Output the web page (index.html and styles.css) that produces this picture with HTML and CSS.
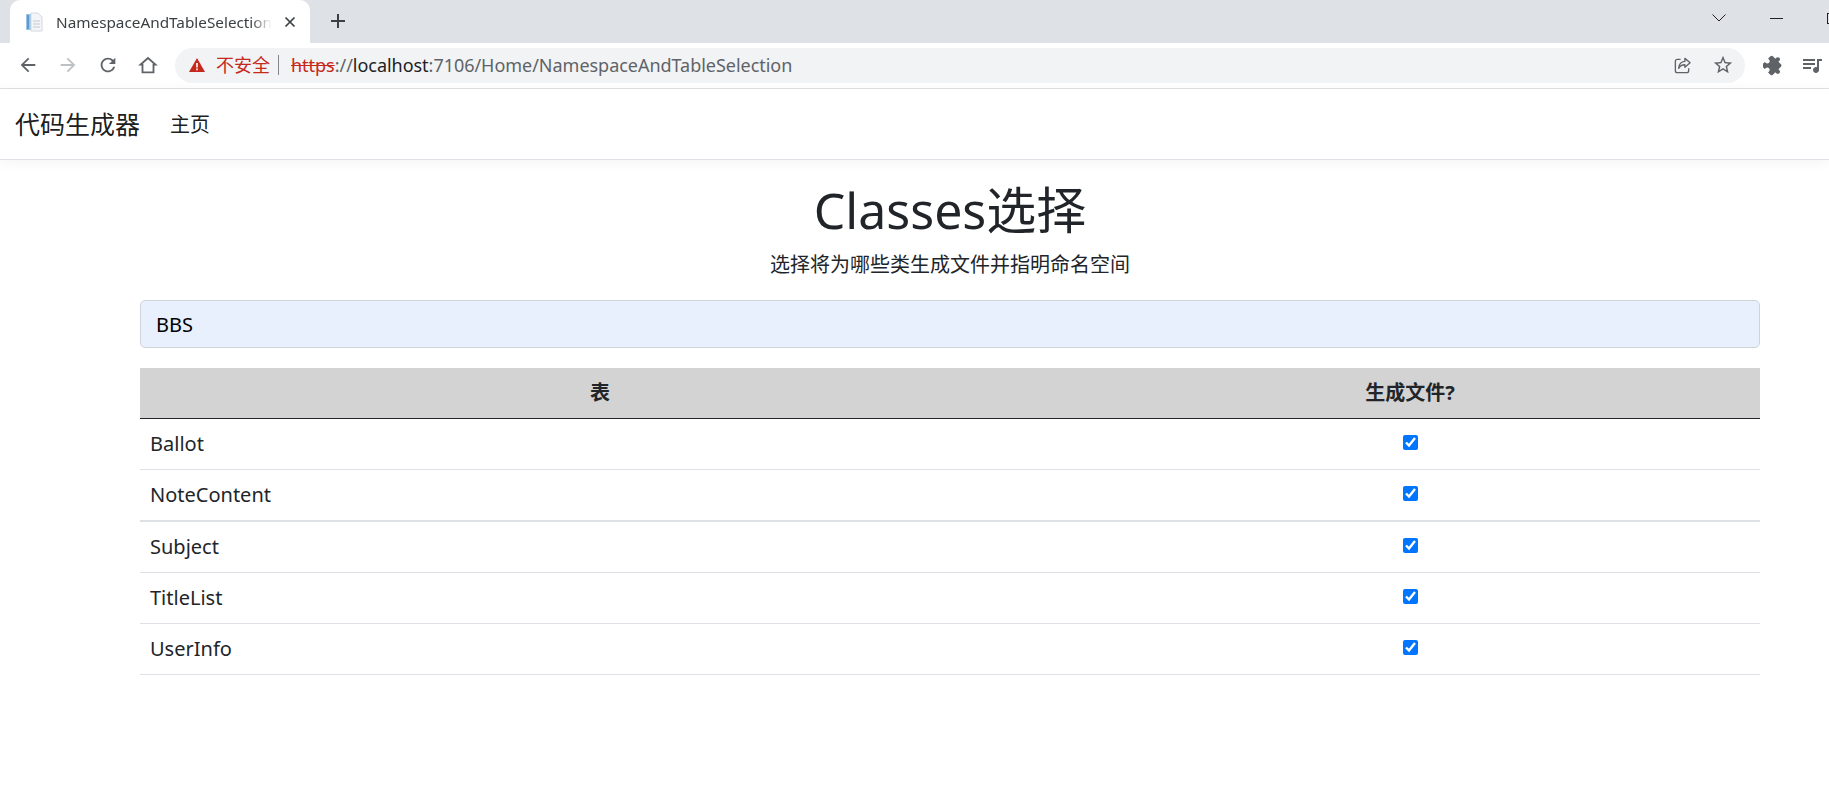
FILE: index.html
```html
<!DOCTYPE html>
<html lang="zh-CN">
<head>
<meta charset="utf-8">
<title>NamespaceAndTableSelection</title>
<link rel="stylesheet" href="styles.css">
</head>
<body>
<div class="tabstrip">
  <div class="tab">
    <svg class="favicon" viewBox="0 0 20 20" width="20" height="20"><rect x="1" y="2" width="5" height="16" fill="#9cc4e6"/><rect x="2" y="3" width="2" height="14" fill="#5b9bd5"/><path d="M6 1h7l4 4v14H6z" fill="#f3f5f8" stroke="#d3d8e0"/><path d="M8 9h7M8 12h7M8 15h7" stroke="#c3c9d2"/></svg>
    <span class="tab-title">NamespaceAndTableSelection</span>
    <svg class="tab-close" viewBox="0 0 12 12" width="12" height="12"><path d="M1.5 1.5l9 9M10.5 1.5l-9 9" stroke="#3c4043" stroke-width="1.7"/></svg>
  </div>
  <svg class="new-tab" viewBox="0 0 16 16" width="16" height="16"><path d="M8 1v14M1 8h14" stroke="#3c4043" stroke-width="2"/></svg>
  <div class="win-controls">
    <svg class="win-chevron" viewBox="0 0 14 8" width="14" height="8"><path d="M.5.5L7 7 13.5.5" fill="none" stroke="#222" stroke-width="1"/></svg>
    <span class="win-min"></span>
    <span class="win-max"></span>
  </div>
</div>
<div class="toolbar">
  <svg class="tool" viewBox="0 0 24 24" width="22" height="22"><path fill="#5f6368" d="M20 11H7.83l5.59-5.59L12 4l-8 8 8 8 1.41-1.41L7.83 13H20v-2z"/></svg>
  <svg class="tool" viewBox="0 0 24 24" width="22" height="22"><path fill="#bdc1c6" d="M12 4l-1.41 1.41L16.17 11H4v2h12.17l-5.58 5.59L12 20l8-8z"/></svg>
  <svg class="tool" viewBox="0 0 24 24" width="22" height="22"><path fill="#5f6368" d="M17.65 6.35A7.958 7.958 0 0012 4c-4.42 0-7.99 3.58-7.99 8s3.57 8 7.99 8c3.73 0 6.84-2.55 7.73-6h-2.08A5.99 5.99 0 0112 18c-3.31 0-6-2.69-6-6s2.69-6 6-6c1.66 0 3.14.69 4.22 1.78L13 11h7V4l-2.35 2.35z"/></svg>
  <svg class="tool" viewBox="0 0 24 24" width="22" height="22"><path fill="none" stroke="#5f6368" stroke-width="2" d="M12 4.3L3.9 11.5H6V20h12v-8.5h2.1z"/></svg>
  <div class="omnibox">
    <svg class="warn" viewBox="0 0 16 14" width="16" height="14"><path fill="#c5291c" d="M8 0l8 14H0z"/><path stroke="#fff" stroke-width="1.6" d="M8 5v4.5M8 10.5v1.8"/></svg>
    <span class="not-secure">不安全</span>
    <span class="sep"></span>
    <span class="url"><s class="scheme">https</s><span class="url-dim">://</span><span class="host">localhost</span><span class="url-dim">:7106/Home/NamespaceAndTableSelection</span></span>
    <svg class="share" viewBox="0 0 20 20" width="19" height="19"><path fill="none" stroke="#5f6368" stroke-width="1.4" d="M8 3.5H4.5a2 2 0 00-2 2v10a2 2 0 002 2h10a2 2 0 002-2V13"/><path fill="none" stroke="#5f6368" stroke-width="1.4" stroke-linejoin="round" d="M12.5 2.5l5.5 4.7-5.5 4.7V9.2C9.5 9.2 7.4 10.4 6 13c.2-4 2.6-7 6.5-7.3z"/></svg>
    <svg class="star" viewBox="0 0 24 24" width="22" height="22"><path fill="#5f6368" d="M22 9.24l-7.19-.62L12 2 9.19 8.63 2 9.24l5.46 4.73L5.82 21 12 17.27 18.18 21l-1.63-7.03L22 9.24zM12 15.4l-3.76 2.27 1-4.28-3.32-2.88 4.38-.38L12 6.1l1.71 4.04 4.38.38-3.32 2.88 1 4.28L12 15.4z"/></svg>
  </div>
  <svg class="puzzle" viewBox="0 0 24 24" width="21" height="21"><path fill="#5f6368" transform="rotate(45 12 12)" d="M20.5 11H19V7c0-1.1-.9-2-2-2h-4V3.5C13 2.12 11.88 1 10.5 1S8 2.12 8 3.5V5H4c-1.1 0-1.99.9-1.99 2v3.8H3.5c1.49 0 2.7 1.21 2.7 2.7s-1.21 2.7-2.7 2.7H2V20c0 1.1.9 2 2 2h3.8v-1.5c0-1.49 1.21-2.7 2.7-2.7 1.49 0 2.7 1.21 2.7 2.7V22H17c1.1 0 2-.9 2-2v-4h1.5c1.38 0 2.5-1.12 2.5-2.5S21.88 11 20.5 11z"/></svg>
  <svg class="queue" viewBox="0 0 24 24" width="24" height="24"><path fill="#5f6368" d="M15 6H3v2h12V6zm0 4H3v2h12v-2zM3 16h8v-2H3v2zM17 6v8.18c-.31-.11-.65-.18-1-.18-1.66 0-3 1.34-3 3s1.34 3 3 3 3-1.34 3-3V8h3V6h-5z"/></svg>
</div>
<nav class="navbar">
  <a class="brand">代码生成器</a>
  <a class="nav-link">主页</a>
</nav>
<main class="container">
  <h1 class="title">Classes选择</h1>
  <p class="subtitle">选择将为哪些类生成文件并指明命名空间</p>
  <input class="ns-input" type="text" value="BBS">
  <table class="class-table">
    <colgroup><col class="col-name"><col class="col-gen"></colgroup>
    <thead>
      <tr><th>表</th><th>生成文件?</th></tr>
    </thead>
    <tbody>
      <tr><td>Ballot</td><td class="check"><input type="checkbox" checked></td></tr>
      <tr class="row-thick"><td>NoteContent</td><td class="check"><input type="checkbox" checked></td></tr>
      <tr><td>Subject</td><td class="check"><input type="checkbox" checked></td></tr>
      <tr><td>TitleList</td><td class="check"><input type="checkbox" checked></td></tr>
      <tr><td>UserInfo</td><td class="check"><input type="checkbox" checked></td></tr>
    </tbody>
  </table>
</main>
</body>
</html>
```
FILE: styles.css
```css
* { box-sizing: border-box; }
html, body { margin: 0; height: 100%; overflow: hidden; }
body {
  background: #fff;
  color: #212529;
  font-family: "Noto Sans", "Noto Sans CJK SC", sans-serif;
  font-size: 20px;
  line-height: 1.5;
}
.tabstrip {
  display: flex;
  align-items: flex-start;
  height: 43px;
  background: #dee1e6;
  padding-left: 10px;
  overflow: hidden;
}
.tab {
  display: flex;
  align-items: center;
  width: 300px;
  height: 43px;
  padding: 0 14px 0 15px;
  background: #fff;
  border-radius: 10px 10px 0 0;
}
.favicon { flex: none; margin-right: 11px; }
.tab-title {
  flex: 1;
  min-width: 0;
  font-size: 15.3px;
  line-height: 20px;
  color: #3c4043;
  white-space: nowrap;
  -webkit-mask-image: linear-gradient(to right, #000 90%, transparent);
  mask-image: linear-gradient(to right, #000 90%, transparent);
}
.tab-close { flex: none; margin-left: 12px; }
.new-tab { margin: 13px 0 0 20px; flex: none; }
.win-controls {
  display: flex;
  align-items: center;
  margin-left: auto;
  height: 36px;
  flex: none;
}
.win-chevron { margin-right: 44px; }
.win-min { width: 13px; height: 1px; background: #222; margin-right: 44px; }
.win-max { width: 2px; height: 11px; border: 1px solid #222; border-right: 0; }
.toolbar {
  display: flex;
  align-items: center;
  height: 46px;
  padding: 0 0 1px 17px;
  border-bottom: 1px solid #dfe1e5;
  background: #fff;
}
.tool { flex: none; margin-right: 18px; }
.tool:nth-child(4) { margin-right: 16px; }
.omnibox {
  display: flex;
  align-items: center;
  width: 1570px;
  height: 35px;
  padding: 0 11px 0 14px;
  background: #f1f3f4;
  border-radius: 18px;
  flex: none;
}
.warn { flex: none; margin-right: 11px; }
.not-secure { font-size: 18px; color: #c5291c; }
.sep { width: 1px; height: 20px; background: #80868b; margin: 0 12px 0 8px; }
.url { flex: 1; font-size: 18px; letter-spacing: -.03px; white-space: nowrap; color: #202124; }
.scheme { color: #c5291c; }
.url-dim { color: #5f6368; }
.host { color: #202124; }
.share { flex: none; margin-right: 20px; }
.star { flex: none; }
.puzzle { flex: none; margin-left: 18px; }
.queue { flex: none; margin-left: 16px; }
.navbar {
  display: flex;
  align-items: center;
  height: 71px;
  padding: 2px 15px 0;
  border-bottom: 1px solid #dee2e6;
  box-shadow: 0 2px 12px rgba(0, 0, 0, .05);
}
.brand { font-size: 25px; color: rgba(0, 0, 0, .9); margin-right: 30px; }
.nav-link { font-size: 20px; color: rgba(0, 0, 0, .9); }
.container { padding: 0 69px 0 140px; }
.title {
  margin: 20px 0 0;
  font-size: 50px;
  line-height: 60px;
  font-weight: 400;
  text-align: center;
}
.subtitle { margin: 10px 0 0; text-align: center; font-size: 20px; line-height: 30px; }
.ns-input {
  display: block;
  width: 100%;
  height: 48px;
  margin-top: 20px;
  padding: 0 15px;
  font: inherit;
  color: #000;
  background: #e8f0fe;
  border: 1px solid #ced4da;
  border-radius: 5px;
  outline: 0;
}
.class-table {
  width: 100%;
  margin-top: 20px;
  border-collapse: separate;
  border-spacing: 0;
  table-layout: fixed;
}
.col-name { width: 920px; }
.class-table th {
  height: 51px;
  padding: 9px 10px;
  background: #d3d3d3;
  border-bottom: 1px solid #212529;
  font-weight: 700;
  text-align: center;
}
.class-table td {
  height: 51px;
  padding: 9px 10px;
  border-bottom: 1px solid #dee2e6;
}
.class-table .row-thick td { height: 52px; border-bottom-width: 2px; }
.class-table .check { text-align: center; }
.check input { width: 15px; height: 15px; margin: 0; accent-color: #0075ff; vertical-align: 1px; }
```
